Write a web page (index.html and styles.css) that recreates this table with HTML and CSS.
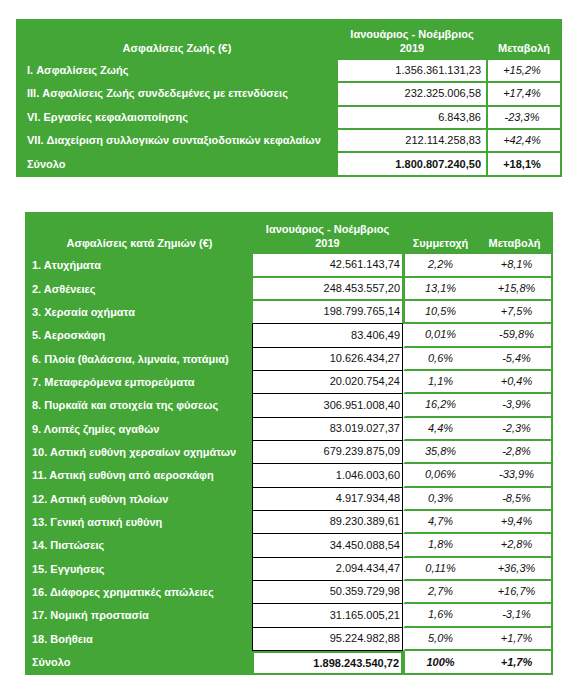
FILE: index.html
```html
<!DOCTYPE html>
<html lang="el">
<head>
<meta charset="utf-8">
<title>Ασφαλίσεις</title>
<link rel="stylesheet" href="styles.css">
</head>
<body>
<table class="t1">
  <colgroup><col class="c1-label"><col class="c1-val"><col class="c1-chg"></colgroup>
  <thead>
    <tr><th class="h-label">Ασφαλίσεις Ζωής (€)</th><th>Ιανουάριος - Νοέμβριος<br>2019</th><th>Μεταβολή</th></tr>
  </thead>
  <tbody>
    <tr><td class="lbl">I. Ασφαλίσεις Ζωής</td><td class="val">1.356.361.131,23</td><td class="chg">+15,2%</td></tr>
    <tr><td class="lbl">III. Ασφαλίσεις Ζωής συνδεδεμένες με επενδύσεις</td><td class="val">232.325.006,58</td><td class="chg">+17,4%</td></tr>
    <tr><td class="lbl">VI. Εργασίες κεφαλαιοποίησης</td><td class="val">6.843,86</td><td class="chg">-23,3%</td></tr>
    <tr><td class="lbl">VII. Διαχείριση συλλογικών συνταξιοδοτικών κεφαλαίων</td><td class="val">212.114.258,83</td><td class="chg">+42,4%</td></tr>
    <tr class="total"><td class="lbl">Σύνολο</td><td class="val">1.800.807.240,50</td><td class="chg">+18,1%</td></tr>
  </tbody>
</table>

<table class="t2">
  <colgroup><col class="c2-label"><col class="c2-val"><col class="c2-part"><col class="c2-chg"></colgroup>
  <thead>
    <tr><th class="h-label">Ασφαλίσεις κατά Ζημιών (€)</th><th>Ιανουάριος - Νοέμβριος<br>2019</th><th>Συμμετοχή</th><th>Μεταβολή</th></tr>
  </thead>
  <tbody>
    <tr class="g"><td class="lbl">1. Ατυχήματα</td><td class="val">42.561.143,74</td><td class="part">2,2%</td><td class="chg">+8,1%</td></tr>
    <tr class="g"><td class="lbl">2. Ασθένειες</td><td class="val">248.453.557,20</td><td class="part">13,1%</td><td class="chg">+15,8%</td></tr>
    <tr class="g g-last"><td class="lbl">3. Χερσαία οχήματα</td><td class="val">198.799.765,14</td><td class="part">10,5%</td><td class="chg">+7,5%</td></tr>
    <tr class="b"><td class="lbl">5. Αεροσκάφη</td><td class="val">83.406,49</td><td class="part">0,01%</td><td class="chg">-59,8%</td></tr>
    <tr class="b"><td class="lbl">6. Πλοία (θαλάσσια, λιμναία, ποτάμια)</td><td class="val">10.626.434,27</td><td class="part">0,6%</td><td class="chg">-5,4%</td></tr>
    <tr class="b"><td class="lbl">7. Μεταφερόμενα εμπορεύματα</td><td class="val">20.020.754,24</td><td class="part">1,1%</td><td class="chg">+0,4%</td></tr>
    <tr class="b"><td class="lbl">8. Πυρκαϊά και στοιχεία της φύσεως</td><td class="val">306.951.008,40</td><td class="part">16,2%</td><td class="chg">-3,9%</td></tr>
    <tr class="b"><td class="lbl">9. Λοιπές ζημίες αγαθών</td><td class="val">83.019.027,37</td><td class="part">4,4%</td><td class="chg">-2,3%</td></tr>
    <tr class="b"><td class="lbl">10. Αστική ευθύνη χερσαίων οχημάτων</td><td class="val">679.239.875,09</td><td class="part">35,8%</td><td class="chg">-2,8%</td></tr>
    <tr class="b"><td class="lbl">11. Αστική ευθύνη από αεροσκάφη</td><td class="val">1.046.003,60</td><td class="part">0,06%</td><td class="chg">-33,9%</td></tr>
    <tr class="b"><td class="lbl">12. Αστική ευθύνη πλοίων</td><td class="val">4.917.934,48</td><td class="part">0,3%</td><td class="chg">-8,5%</td></tr>
    <tr class="b"><td class="lbl">13. Γενική αστική ευθύνη</td><td class="val">89.230.389,61</td><td class="part">4,7%</td><td class="chg">+9,4%</td></tr>
    <tr class="b"><td class="lbl">14. Πιστώσεις</td><td class="val">34.450.088,54</td><td class="part">1,8%</td><td class="chg">+2,8%</td></tr>
    <tr class="b"><td class="lbl">15. Εγγυήσεις</td><td class="val">2.094.434,47</td><td class="part">0,11%</td><td class="chg">+36,3%</td></tr>
    <tr class="b"><td class="lbl">16. Διάφορες χρηματικές απώλειες</td><td class="val">50.359.729,98</td><td class="part">2,7%</td><td class="chg">+16,7%</td></tr>
    <tr class="b"><td class="lbl">17. Νομική προστασία</td><td class="val">31.165.005,21</td><td class="part">1,6%</td><td class="chg">-3,1%</td></tr>
    <tr class="b"><td class="lbl">18. Βοήθεια</td><td class="val">95.224.982,88</td><td class="part">5,0%</td><td class="chg">+1,7%</td></tr>
    <tr class="total"><td class="lbl">Σύνολο</td><td class="val">1.898.243.540,72</td><td class="part">100%</td><td class="chg">+1,7%</td></tr>
  </tbody>
</table>
</body>
</html>
```

FILE: styles.css
```css
html, body {
  margin: 0;
  padding: 0;
  background: #ffffff;
}
body {
  font-family: "Liberation Sans", Arial, sans-serif;
  font-size: 11px;
  color: #111;
}

table {
  table-layout: fixed;
  background: #44a637;
}
th {
  color: #fff;
  font-weight: bold;
  text-align: center;
  vertical-align: bottom;
  line-height: 14px;
  padding: 0 0 2px 0;
}
td {
  padding: 0;
  line-height: 21.33px;
  vertical-align: middle;
  white-space: nowrap;
}
.lbl {
  color: #fff;
  font-weight: bold;
  text-align: left;
}
.val {
  background: #fff;
  text-align: right;
}
.chg, .part {
  background: #fff;
  text-align: center;
  font-style: italic;
}

/* Table 1 */
.t1 {
  border-collapse: separate;
  border-spacing: 2px;
  width: 546px;
  margin: 19px 0 0 16px;
}
.c1-label { width: 318px; }
.c1-val { width: 148px; }
.c1-chg { width: 72px; }
.t1 th { height: 34px; padding-bottom: 3px; }
.t1 .lbl { padding-left: 9px; }
.t1 .val { padding-right: 5px; }
.t1 .chg { padding-right: 4px; }
.t1 .total td { font-weight: bold; line-height: 22px; }
.t1 .total .chg { font-style: normal; }

/* Table 2 */
.t2 {
  border-collapse: separate;
  border-spacing: 0;
  padding: 2px;
  width: 528px;
  margin: 35px 0 0 25px;
}
.c2-label { width: 225px; }
.c2-val { width: 151px; }
.c2-part { width: 75px; }
.c2-chg { width: 73px; }
.t2 th { height: 36px; padding-bottom: 4px; }
.t2 .lbl { padding-left: 5px; }
.t2 .val { padding-right: 2px; }
.t2 .part, .t2 .chg { border-bottom: 2px solid #44a637; }
.t2 .part { padding-right: 2px; }
.t2 .chg { padding-left: 4px; }

.t2 .g .val {
  border-left: 1px solid #44a637;
  border-right: 1px solid #44a637;
  border-bottom: 2px solid #44a637;
}
.t2 .g .part { border-left: 2px solid #44a637; }
.t2 .g-last .val { border-bottom: 1px solid #000; }

.t2 .b .val {
  border-left: 1px solid #000;
  border-right: 1px solid #000;
  border-bottom: 1px solid #000;
}
.t2 .b .part { border-left: 2px solid #fff; }

.t2 .total td { font-weight: bold; border-bottom: 0; line-height: 20.5px; }
.t2 .total .val {
  border: 2px solid #44a637;
  border-bottom: 0;
}
.t2 .total .part { border-left: 2px solid #44a637; }
```
